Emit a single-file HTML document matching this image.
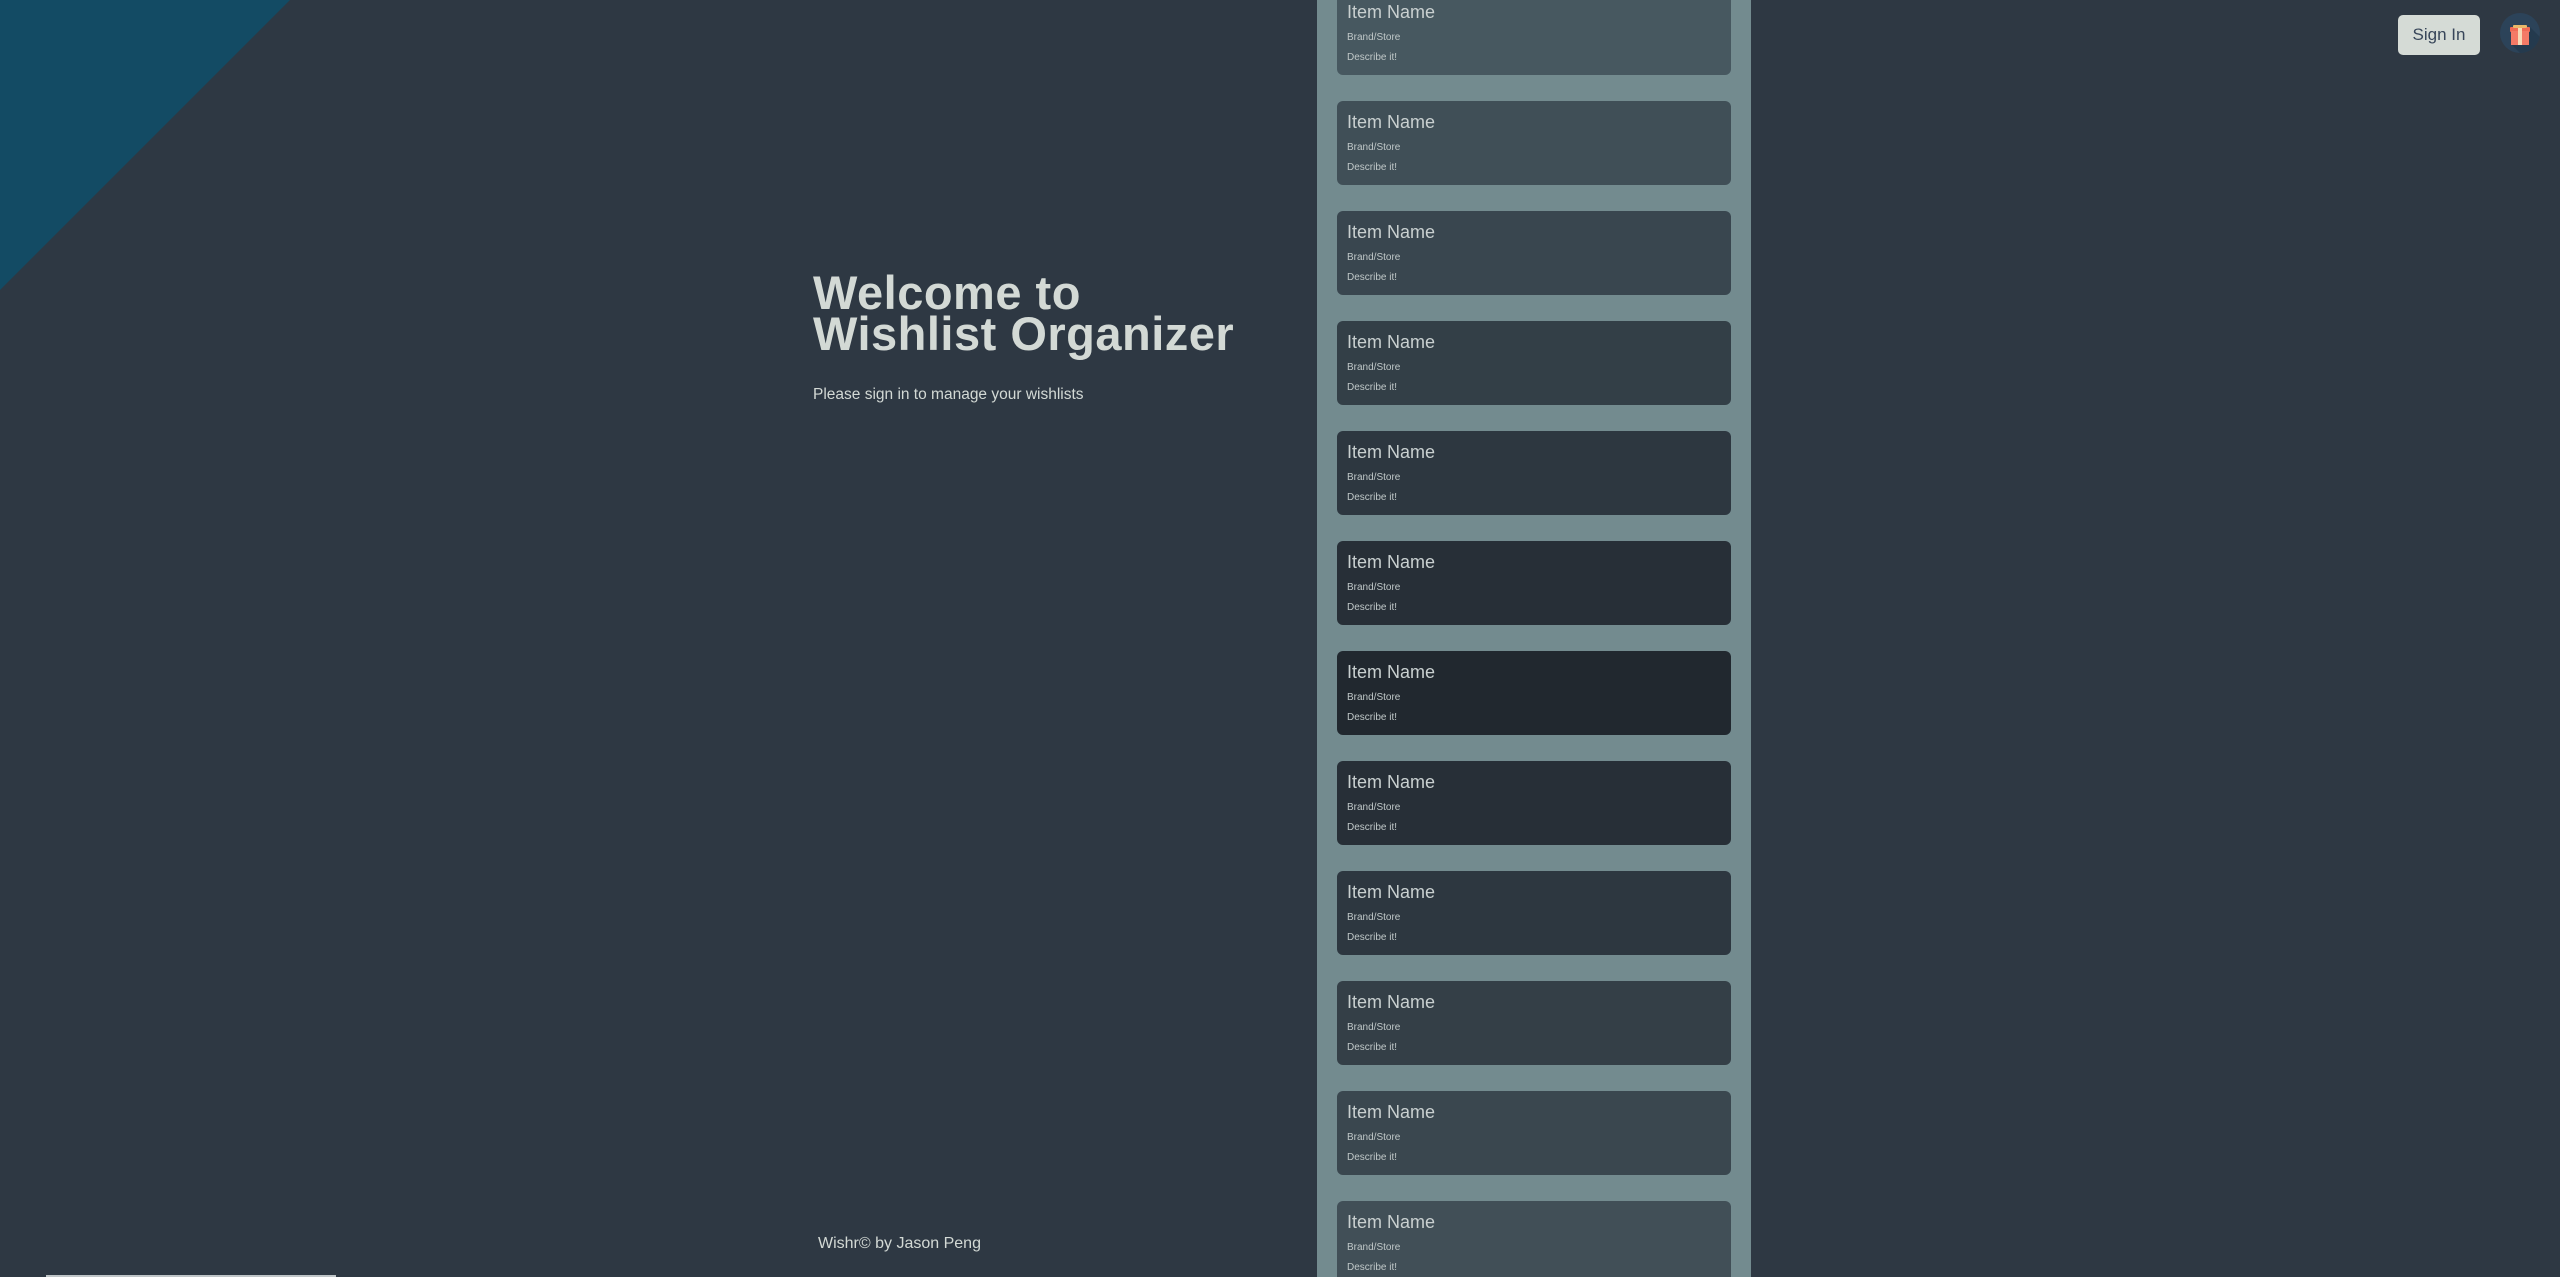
<!DOCTYPE html>
<html><head><meta charset="utf-8"><style>
html,body{margin:0;padding:0;overflow:hidden;width:2560px;height:1277px}
body{background:#2e3843;font-family:"Liberation Sans",sans-serif;position:relative}
.tri{position:absolute;left:0;top:0;width:0;height:0;border-top:290px solid #134b64;border-right:290px solid transparent}
.col{position:absolute;left:1317px;top:0;width:434px;height:1277px;background:#738b8f;overflow:hidden}
.card{position:absolute;left:20px;width:394px;height:84px;border-radius:6px}
.card .n{position:absolute;left:10px;top:11px;font-size:18px;color:#c9d0d0;line-height:20px}
.card .b{position:absolute;left:10px;top:40px;font-size:10px;color:#c0c8c8;line-height:14px}
.card .d{position:absolute;left:10px;top:60px;font-size:10px;color:#c0c8c8;line-height:14px}
h1{position:absolute;left:813px;top:272px;margin:0;font-size:47px;line-height:41px;color:#d3d9d5;font-weight:bold;letter-spacing:0.5px}
.sub{position:absolute;left:813px;top:386px;font-size:15.5px;color:#d3d9d5}
.foot{position:absolute;left:818px;top:1235px;font-size:16px;color:#d3d9d5}
.btn{position:absolute;left:2398px;top:15px;width:82px;height:40px;background:#d5dbd6;border-radius:5px;color:#38465a;font-size:17px;line-height:40px;text-align:center}
.gift{position:absolute;left:2500px;top:13px;width:40px;height:40px;border-radius:50%;background:#2c4359;overflow:hidden}
.bar{position:absolute;left:46px;top:1275px;width:290px;height:2px;background:#bfc5c8}
</style></head><body>
<div class="tri"></div>
<h1>Welcome to<br>Wishlist Organizer</h1>
<div class="sub">Please sign in to manage your wishlists</div>
<div class="foot">Wishr© by Jason Peng</div>
<div class="col">
<div class="card" style="top:-9px;background:#475860"><div class="n">Item Name</div><div class="b">Brand/Store</div><div class="d">Describe it!</div></div>
<div class="card" style="top:101px;background:#404f57"><div class="n">Item Name</div><div class="b">Brand/Store</div><div class="d">Describe it!</div></div>
<div class="card" style="top:211px;background:#39464f"><div class="n">Item Name</div><div class="b">Brand/Store</div><div class="d">Describe it!</div></div>
<div class="card" style="top:321px;background:#333f47"><div class="n">Item Name</div><div class="b">Brand/Store</div><div class="d">Describe it!</div></div>
<div class="card" style="top:431px;background:#2d3740"><div class="n">Item Name</div><div class="b">Brand/Store</div><div class="d">Describe it!</div></div>
<div class="card" style="top:541px;background:#272f37"><div class="n">Item Name</div><div class="b">Brand/Store</div><div class="d">Describe it!</div></div>
<div class="card" style="top:651px;background:#21282f"><div class="n">Item Name</div><div class="b">Brand/Store</div><div class="d">Describe it!</div></div>
<div class="card" style="top:761px;background:#272f37"><div class="n">Item Name</div><div class="b">Brand/Store</div><div class="d">Describe it!</div></div>
<div class="card" style="top:871px;background:#2d3740"><div class="n">Item Name</div><div class="b">Brand/Store</div><div class="d">Describe it!</div></div>
<div class="card" style="top:981px;background:#343f47"><div class="n">Item Name</div><div class="b">Brand/Store</div><div class="d">Describe it!</div></div>
<div class="card" style="top:1091px;background:#3a474f"><div class="n">Item Name</div><div class="b">Brand/Store</div><div class="d">Describe it!</div></div>
<div class="card" style="top:1201px;background:#414f57"><div class="n">Item Name</div><div class="b">Brand/Store</div><div class="d">Describe it!</div></div>
</div>
<div class="btn">Sign In</div>
<div class="gift"><svg width="40" height="40" viewBox="0 0 40 40">
<polygon points="30,14 60,44 40,60 12,32" fill="#243a4e"/>
<rect x="10" y="14" width="20" height="5" rx="1" fill="#f06a55"/>
<rect x="11" y="18" width="18" height="14" fill="#f47a66"/>
<rect x="18" y="14" width="4" height="18" fill="#f7d9b6"/>
<rect x="13" y="12" width="14" height="3" rx="1" fill="#e8b86a"/>
</svg></div>
<div class="bar"></div>
</body></html>
